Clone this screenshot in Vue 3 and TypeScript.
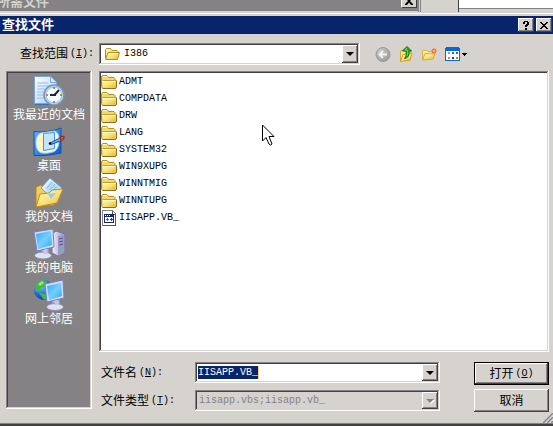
<script setup lang="ts">
import { ref } from 'vue'

interface Place {
  id: string
  label: string
}

const places: Place[] = [
  { id: 'recent', label: '我最近的文档' },
  { id: 'desktop', label: '桌面' },
  { id: 'documents', label: '我的文档' },
  { id: 'computer', label: '我的电脑' },
  { id: 'network', label: '网上邻居' },
]

const folders: string[] = ['ADMT', 'COMPDATA', 'DRW', 'LANG', 'SYSTEM32', 'WIN9XUPG', 'WINNTMIG', 'WINNTUPG']
const files: string[] = ['IISAPP.VB_']
const fileName = ref('IISAPP.VB_')
</script>

<template>
  <div class="screen">
    <svg width="0" height="0" class="defs" aria-hidden="true">
      <defs>
        <linearGradient id="gold" x1="0" y1="0" x2="1" y2="1">
          <stop offset="0" stop-color="#fffbc0" />
          <stop offset="0.55" stop-color="#f9e078" />
          <stop offset="1" stop-color="#e2b638" />
        </linearGradient>
        <linearGradient id="glass" x1="0" y1="0" x2="1" y2="1">
          <stop offset="0" stop-color="#3aa2fa" />
          <stop offset="0.5" stop-color="#74d0ff" />
          <stop offset="1" stop-color="#30a8f8" />
        </linearGradient>
        <linearGradient id="paper" x1="0" y1="0" x2="1" y2="1">
          <stop offset="0" stop-color="#ffffff" />
          <stop offset="1" stop-color="#a8cefa" />
        </linearGradient>
        <linearGradient id="metal" x1="0" y1="0" x2="1" y2="0">
          <stop offset="0" stop-color="#f0f0fc" />
          <stop offset="1" stop-color="#9090c0" />
        </linearGradient>
        <linearGradient id="royal" x1="0" y1="0" x2="1" y2="1">
          <stop offset="0" stop-color="#62b8fa" />
          <stop offset="1" stop-color="#0c59c8" />
        </linearGradient>
        <radialGradient id="globe" cx="0.35" cy="0.3" r="0.8">
          <stop offset="0" stop-color="#72c8ff" />
          <stop offset="0.6" stop-color="#1664d8" />
          <stop offset="1" stop-color="#062c90" />
        </radialGradient>
        <radialGradient id="disc" cx="0.35" cy="0.3" r="0.8">
          <stop offset="0" stop-color="#cccccc" />
          <stop offset="1" stop-color="#989898" />
        </radialGradient>
        <symbol id="folder" viewBox="0 0 16 16">
          <path d="M.5 12.5V3l1-1.500h4.500L7.500 3.500h5.500l1 1v2h1.500v6.500l-1 1.500H1.500z" fill="#f4d868" stroke="#b8921c" />
          <path d="M1.500 6.500h13v7h-12z" fill="url(#gold)" />
          <path d="M1.500 6.500h12.500" stroke="#c89c28" />
          <path d="M2 2.500h4M2 7.500h12" stroke="#fffbd0" fill="none" />
          <path d="M2 14.500h12.500l1-1.500V7" stroke="#8e7018" fill="none" />
        </symbol>
      </defs>
    </svg>

    <div class="behind">
      <div class="behind-title">
        <span class="behind-text">所需文件</span>
        <span class="behind-close"><svg width="8" height="7" viewBox="0 0 8 7"><path d="M0 0h2l2 2 2-2h2L5 3l3 3v1H6L4 4.500 2 7H0V6l3-3z" /></svg></span>
      </div>
      <div class="behind-gap"></div>
      <div class="behind-page"></div>
    </div>

    <main class="dialog">
      <header class="titlebar">
        <h1>查找文件</h1>
        <button class="cap" type="button" aria-label="帮助">
          <svg width="8" height="9" viewBox="0 0 8 9" shape-rendering="crispEdges"><path d="M2 0h4v1h1v3H6v1H5v1H3V4h1V3h1V1H3v2H1V1h1zM3 7h2v2H3z" /></svg>
        </button>
        <button class="cap" type="button" aria-label="关闭">
          <svg width="8" height="7" viewBox="0 0 8 7" shape-rendering="crispEdges"><path d="M0 0h2v1h1v1h2V1h1V0h2v1H7v1H6v1H5v1h1v1h1v1h1v1H6V6H5V5H3v1H2v1H0V6h1V5h1V4h1V3H2V2H1V1H0z" /></svg>
        </button>
      </header>

      <div class="toolbar">
        <label class="look" for="look">查找范围<span class="latin">(<u>I</u>):</span></label>
        <div class="combo look-combo">
          <svg class="combo-icon" width="16" height="16" viewBox="0 0 16 16">
            <path d="M1.500 12.500V3.500l1-1h4l1.500 2h5l1 1V8" fill="#ffef98" stroke="#b88c18" />
            <path d="M1.500 13.500 4 6.500h11.500l-2 7z" fill="url(#gold)" stroke="#b88c18" />
            <path d="M3 4h3M5 7.500h9" stroke="#fffcd8" />
          </svg>
          <select id="look" class="latin"><option>I386</option></select>
          <span class="drop"><i></i></span>
        </div>
        <nav class="tools">
          <button type="button" aria-label="后退">
            <svg width="16" height="16" viewBox="0 0 16 16">
              <circle cx="8" cy="8.500" r="7" fill="url(#disc)" stroke="#989898" />
              <path d="M12 8.500H4.500M8 5 4.500 8.500 8 12" fill="none" stroke="#f2f2f2" stroke-width="2" />
            </svg>
          </button>
          <button type="button" aria-label="向上一级">
            <svg width="16" height="16" viewBox="0 0 16 16">
              <path d="M2.500 15V5l3-1 2 1h5v9z" fill="#fae67c" stroke="#d8ad32" />
              <path d="M2.500 15.500 5 8.500l9-1.500-2 7z" fill="url(#gold)" stroke="#d1a028" />
              <path d="M9 .5 13.500 5H11c.5 4-1 7-4.500 7.500C8.500 10 8.500 8 8 5H4.500z" fill="#26a52d" stroke="#13701b" />
              <path d="m9 2-2 2h2c1 2 .8 4 0 6" fill="none" stroke="#75d66c" />
            </svg>
          </button>
          <button type="button" aria-label="新建文件夹">
            <svg width="17" height="16" viewBox="0 0 17 16">
              <path d="M1.500 13.500v-9h4l1.500 1h5v7z" fill="#fff1a0" stroke="#e0b243" />
              <path d="M1.500 14 4 7.500l10-.5-2 6z" fill="url(#gold)" stroke="#dca933" />
              <path d="M13 2v6M10 5h6M11 3l4 4M15 3l-4 4" stroke="#f47432" />
              <circle cx="13" cy="5" r="2" fill="#ff6c36" /><circle cx="13" cy="5" r="1" fill="#ffda70" />
            </svg>
          </button>
          <button type="button" aria-label="查看">
            <svg width="23" height="16" viewBox="0 0 23 16" shape-rendering="crispEdges">
              <path d="M0 2h1V1h13v1h1v13H0z" fill="#0869d6" /><path d="M1 5h13v9H1z" fill="#fff" />
              <path d="M3 6h2v2H3z" fill="#a09ac0" /><path d="M7 6h2v2H7z" fill="#276ccc" /><path d="M11 6h2v2h-2z" fill="#119521" />
              <path d="M3 11h2v2H3z" fill="#ed7950" /><path d="M7 11h2v2H7z" fill="#0752a7" /><path d="M11 11h2v2h-2z" fill="#b58b0a" />
              <path d="M17 7h5v1h-1v1h-1v1h-1V9h-1V8h-1z" />
            </svg>
          </button>
        </nav>
      </div>

      <div class="body">
        <nav class="places">
          <button v-for="place in places" :key="place.id" type="button" class="place">
            <svg v-if="place.id === 'recent'" width="32" height="32" viewBox="0 0 32 32">
              <path d="M1.500 1.500h16l6 6v21h-22z" fill="url(#paper)" stroke="#75a4e4" />
              <path d="M17.500 1.500v6h6" fill="#d5e8ff" stroke="#78a8e4" />
              <path d="M4 8h11M4 11h15M4 14h12M4 17h8M4 20h7M4 23h7" stroke="#94bdf0" />
              <path d="M2 29.500h23" stroke="#3474bf" />
              <circle cx="21" cy="20" r="10" fill="#b4d8ec" stroke="#7696b4" stroke-width="1.500" />
              <circle cx="21" cy="20" r="7.800" fill="#f5fcff" stroke="#a2c8dc" />
              <path d="M21 20.500 26 15M17 20h6" stroke="#142838" stroke-width="2" />
              <path d="M21 12v2M21 26v2M13 20h2M27 20h2" stroke="#e44c2c" stroke-width="1.500" />
            </svg>
            <svg v-else-if="place.id === 'desktop'" width="32" height="32" viewBox="0 0 32 32">
              <path d="M1 5.500c9 1 18 0 27-3.500v25c-9 2-18 3-27 2.500z" fill="url(#royal)" stroke="#0d54b8" />
              <path d="m8 7 14-2c3 2 4 4 4 8 0 6-1 9-4 12-4 2-10 3-15 1.500C4 24 3 21 3 17c0-5 1-8 5-10z" fill="#fff4c4" stroke="#99d1ff" />
              <path d="m10.500 7.500 11-1v16l-11 2z" fill="#c4e4ff" stroke="#3c98e6" />
              <path d="m17 17 10-5 1.500 2.500L18 18.500z" fill="#73b6f2" stroke="#164992" />
              <path d="m27 11 4-1v3l-3 2z" fill="#df4d32" stroke="#95291e" /><circle cx="17" cy="17.500" r="1.300" />
            </svg>
            <svg v-else-if="place.id === 'documents'" width="32" height="32" viewBox="0 0 32 32">
              <path d="M3 30V10l5-2 4 3h9v17z" fill="#f2cd5c" stroke="#b78416" />
              <path d="m8 11 9-10 12 10-9 11z" fill="url(#paper)" stroke="#55a3e5" />
              <path d="m12 11 6-7 8 7-7 8z" fill="#b4dfff" />
              <path d="m14 11 5-6M17 13l5-6M20 14l4-5" stroke="#7cc0f0" />
              <path d="M3 30 7 17l9-1 3-3 11-1-6 14z" fill="url(#gold)" stroke="#c28b18" />
              <path d="m15 17 8-1-5 6z" fill="#91caf5" />
            </svg>
            <svg v-else-if="place.id === 'computer'" width="32" height="32" viewBox="0 0 32 32">
              <path d="m19 6 4-3 9 3v19l-7 3-6-3z" fill="url(#metal)" stroke="#7674a8" />
              <path d="m25 8 6-1v18l-6 2z" fill="#9a99c9" /><path d="m26 11 4-1M26 14l4-1M26 17l4-1" stroke="#55548a" />
              <path d="M28 21h2v2h-2z" fill="#52df39" />
              <path d="m8 21 7-2 1 7H9z" fill="#abb0d8" /><ellipse cx="10" cy="27.500" rx="8.500" ry="3.500" fill="#e0e0f0" stroke="#8a8ab8" />
              <path d="m1 4 19-3 1 18-17 4z" fill="#d4dcf8" stroke="#7882be" />
              <path d="m3 6 15-3 1 14-14 4z" fill="url(#glass)" />
              <path d="m10 22 4-1 1 5h-4z" fill="#c4c8e8" />
            </svg>
            <svg v-else width="32" height="32" viewBox="0 0 32 32">
              <circle cx="11" cy="11" r="10" fill="url(#globe)" />
              <path d="m3 5 5-4 6 1-1 5-5 2-1 4-5-1zM6 14l7 1 3 3-5 3z" fill="#44b749" /><path d="m5 5 4-3 2 2-4 3z" fill="#a1e277" />
              <path d="m19 22 7-2 1 6h-7z" fill="#abb0d8" /><ellipse cx="22" cy="28" rx="8.500" ry="3.500" fill="#e0e0f0" stroke="#8a8ab8" />
              <path d="m12 5 18-4 1 18-17 4z" fill="#d4dcf8" stroke="#7882be" />
              <path d="m14 7 14-3 1 13-13 4z" fill="url(#glass)" />
              <path d="m21 22 4-1 1 5h-4z" fill="#c4c8e8" />
            </svg>
            <span>{{ place.label }}</span>
          </button>
        </nav>

        <section class="right">
          <div class="files">
            <ul>
              <li v-for="name in folders" :key="name">
                <button type="button"><svg width="16" height="16"><use href="#folder" /></svg><span class="latin">{{ name }}</span></button>
              </li>
              <li v-for="name in files" :key="name">
                <button type="button">
                  <svg width="16" height="16" viewBox="0 0 16 16" shape-rendering="crispEdges">
                    <path d="M1.500.5h10l3 3v12h-13z" fill="#fff" stroke="#858585" /><path d="M11.500 1v3h3M2 15.500h12.500V4" fill="none" stroke="#555" />
                    <path d="M3 4h10v9H3z" fill="#16266e" /><path d="M4 7h8v5H4z" fill="#fff" />
                    <path d="M5 9h1V8h1v1h1v1H7v1H6v-1H5z" fill="#e12b25" /><path d="M9 9h1V8h1v1h1v1h-1v1h-1v-1H9z" fill="#1636c9" />
                    <path d="M4 5.500h1M6 5.500h1M8 5.500h1" stroke="#fff" />
                  </svg>
                  <span class="latin">{{ name }}</span>
                </button>
              </li>
            </ul>
            <svg class="pointer" width="13" height="22" viewBox="0 0 13 22">
              <path d="M.5 1v16l3.500-3.500 3 6.500 1.500 1 1.500-1-3-7.500h5z" fill="#fff" stroke="#000" />
            </svg>
          </div>

          <form class="form" @submit.prevent>
            <div class="fields">
              <label for="fname">文件名<span class="latin">(<u>N</u>):</span></label>
              <div class="combo">
                <input id="fname" v-model="fileName" class="latin" type="text" spellcheck="false" />
                <button class="drop" type="button" aria-label="展开"><i></i></button>
              </div>
              <label for="ftype">文件类型<span class="latin">(<u>T</u>):</span></label>
              <div class="combo disabled">
                <select id="ftype" class="latin" disabled><option>iisapp.vbs;iisapp.vb_</option></select>
                <span class="drop"><i></i></span>
              </div>
            </div>
            <div class="actions">
              <button class="push default" type="submit">打开<span class="latin">(<u>O</u>)</span></button>
              <button class="push" type="button">取消</button>
            </div>
          </form>
        </section>
      </div>
      <svg class="grip" width="11" height="12" viewBox="0 0 11 12">
        <path d="M0 12 11 1M4 12l7-7M8 12l3-3" stroke="#fff" /><path d="M1 12 11 2M5 12l6-6M9 12l2-2" stroke="#848284" stroke-width="1.500" />
      </svg>
    </main>
  </div>
</template>

<style>
body {
  margin: 0;
  background: #d6d3ce;
}
</style>

<style scoped>
.screen {
  display: flex;
  flex-direction: column;
  min-height: 100vh;
  overflow: hidden;
  font: 12px/16px "Liberation Sans", "Noto Sans CJK SC", sans-serif;
  color: #000;
}
.screen * {
  box-sizing: border-box;
}
.defs {
  position: absolute;
}
svg {
  display: block;
  flex: none;
}
.latin {
  font: 10px/16px "Liberation Mono", "Noto Sans CJK SC", monospace;
}
button {
  margin: 0;
  padding: 0;
  border: 0;
  background: none;
  font: inherit;
  color: inherit;
}
.behind {
  display: flex;
  height: 12px;
  background: #d6d3ce;
}
.behind-title {
  display: flex;
  justify-content: space-between;
  width: 418px;
  height: 11px;
  overflow: hidden;
  background: #848284;
  color: #d6d3ce;
}
.behind-text {
  font-size: 13px;
  font-weight: 700;
  line-height: 16px;
  margin: -6px 0 0 -3px;
}
.behind-close {
  display: flex;
  justify-content: center;
  width: 16px;
  height: 8px;
  margin-right: 1px;
  background: #d6d3ce;
  border-left: 1px solid #fff;
  border-right: 1px solid #424142;
  border-bottom: 1px solid #424142;
  overflow: hidden;
}
.behind-close svg {
  margin-top: -2px;
}
.behind-gap {
  width: 41px;
  border-left: 3px double #848284;
  border-right: 1px solid #424142;
}
.behind-page {
  flex: 1;
  height: 9px;
  background: #fff;
  border-bottom: 1px solid #848284;
}
.dialog {
  position: relative;
  display: flex;
  flex-direction: column;
  flex: 1;
  background: #d6d3ce;
  border-bottom: 2px solid #424142;
  box-shadow: inset 0 -1px #848284, inset 0 1px #d6d3ce, inset 0 2px #fff;
  padding-top: 4px;
}
.titlebar {
  display: flex;
  align-items: center;
  height: 18px;
  padding: 0 1px 0 2px;
  background: #08246b;
}
h1 {
  flex: 1;
  margin: 0;
  font-size: 13px;
  line-height: 18px;
  color: #fff;
}
.cap {
  display: flex;
  align-items: center;
  justify-content: center;
  width: 16px;
  height: 14px;
  margin-left: 2px;
}
.cap,
.drop,
.push {
  background: #d6d3ce;
  box-shadow: inset -1px -1px #424142, inset 1px 1px #fff, inset -2px -2px #848284;
}
.toolbar {
  display: flex;
  align-items: center;
  padding: 9px 4px 6px 20px;
}
.look {
  width: 79px;
}
label {
  display: flex;
  align-items: center;
  white-space: nowrap;
}
label .latin,
.push .latin {
  margin-left: 2px;
}
.combo {
  position: relative;
  display: flex;
  align-items: center;
  height: 21px;
  padding: 2px;
  background: #fff;
  box-shadow: inset -1px -1px #fff, inset 1px 1px #848284, inset -2px -2px #d6d3ce, inset 2px 2px #424142;
}
.look-combo {
  width: 261px;
  height: 22px;
  padding-left: 5px;
}
select {
  appearance: none;
  flex: 1;
  min-width: 0;
  height: 16px;
  margin: 0;
  padding: 0 4px;
  border: 0;
  background: transparent;
  color: #000;
  opacity: 1;
}
.drop {
  display: flex;
  align-items: center;
  justify-content: center;
  width: 16px;
  height: 100%;
  pointer-events: none;
}
.drop i {
  border: 4px solid transparent;
  border-top-color: #000;
  border-bottom: 0;
}
.disabled {
  background: #d6d3ce;
}
.disabled select {
  padding: 0 2px;
  color: #848284;
}
.disabled .drop i {
  border-top-color: #848284;
  filter: drop-shadow(1px 1px #fff);
}
input {
  width: 61px;
  height: 13px;
  margin: 0 auto 0 1px;
  padding: 0;
  border: 0;
  border-right: 1px solid #ffcf7b;
  border-radius: 0;
  outline: 0;
  background: #08246b;
  color: #fff;
}
input.latin {
  line-height: 13px;
}
.tools {
  display: flex;
  gap: 7px;
  margin-left: 15px;
}
.body {
  display: flex;
  flex: 1;
  gap: 7px;
  padding: 0 4px 0 6px;
}
.places {
  display: flex;
  flex-direction: column;
  width: 86px;
  margin-bottom: 15px;
  padding: 4px 2px;
  background: #848284;
  box-shadow: inset -1px -1px #fff, inset 1px 1px #848284, inset -2px -2px #d6d3ce, inset 2px 2px #424142;
  color: #fff;
}
.place {
  display: flex;
  flex-direction: column;
  align-items: center;
  height: 51px;
  white-space: nowrap;
}
.right {
  display: flex;
  flex-direction: column;
  flex: 1;
  min-width: 0;
  padding-bottom: 12px;
}
.files {
  position: relative;
  flex: 1;
  padding: 2px;
  background: #fff;
  box-shadow: inset -1px -1px #fff, inset 1px 1px #848284, inset -2px -2px #d6d3ce, inset 2px 2px #424142;
}
.files ul {
  margin: 0;
  padding: 0;
  list-style: none;
}
.files button {
  display: flex;
  align-items: center;
  gap: 2px;
  height: 17px;
}
.pointer {
  position: absolute;
  left: 163px;
  top: 53px;
}
.form {
  display: flex;
  justify-content: space-between;
  gap: 16px;
  margin-top: 10px;
}
.fields {
  display: grid;
  grid-template-columns: 94px 1fr;
  flex: 1;
  max-width: 341px;
  gap: 7px 0;
  align-content: start;
  padding-left: 2px;
}
.actions {
  display: flex;
  flex-direction: column;
  gap: 4px;
  width: 75px;
}
.push {
  display: flex;
  align-items: center;
  justify-content: center;
  height: 23px;
}
.default {
  border: 1px solid #000;
}
.grip {
  position: absolute;
  right: 0;
  bottom: 1px;
}
</style>
